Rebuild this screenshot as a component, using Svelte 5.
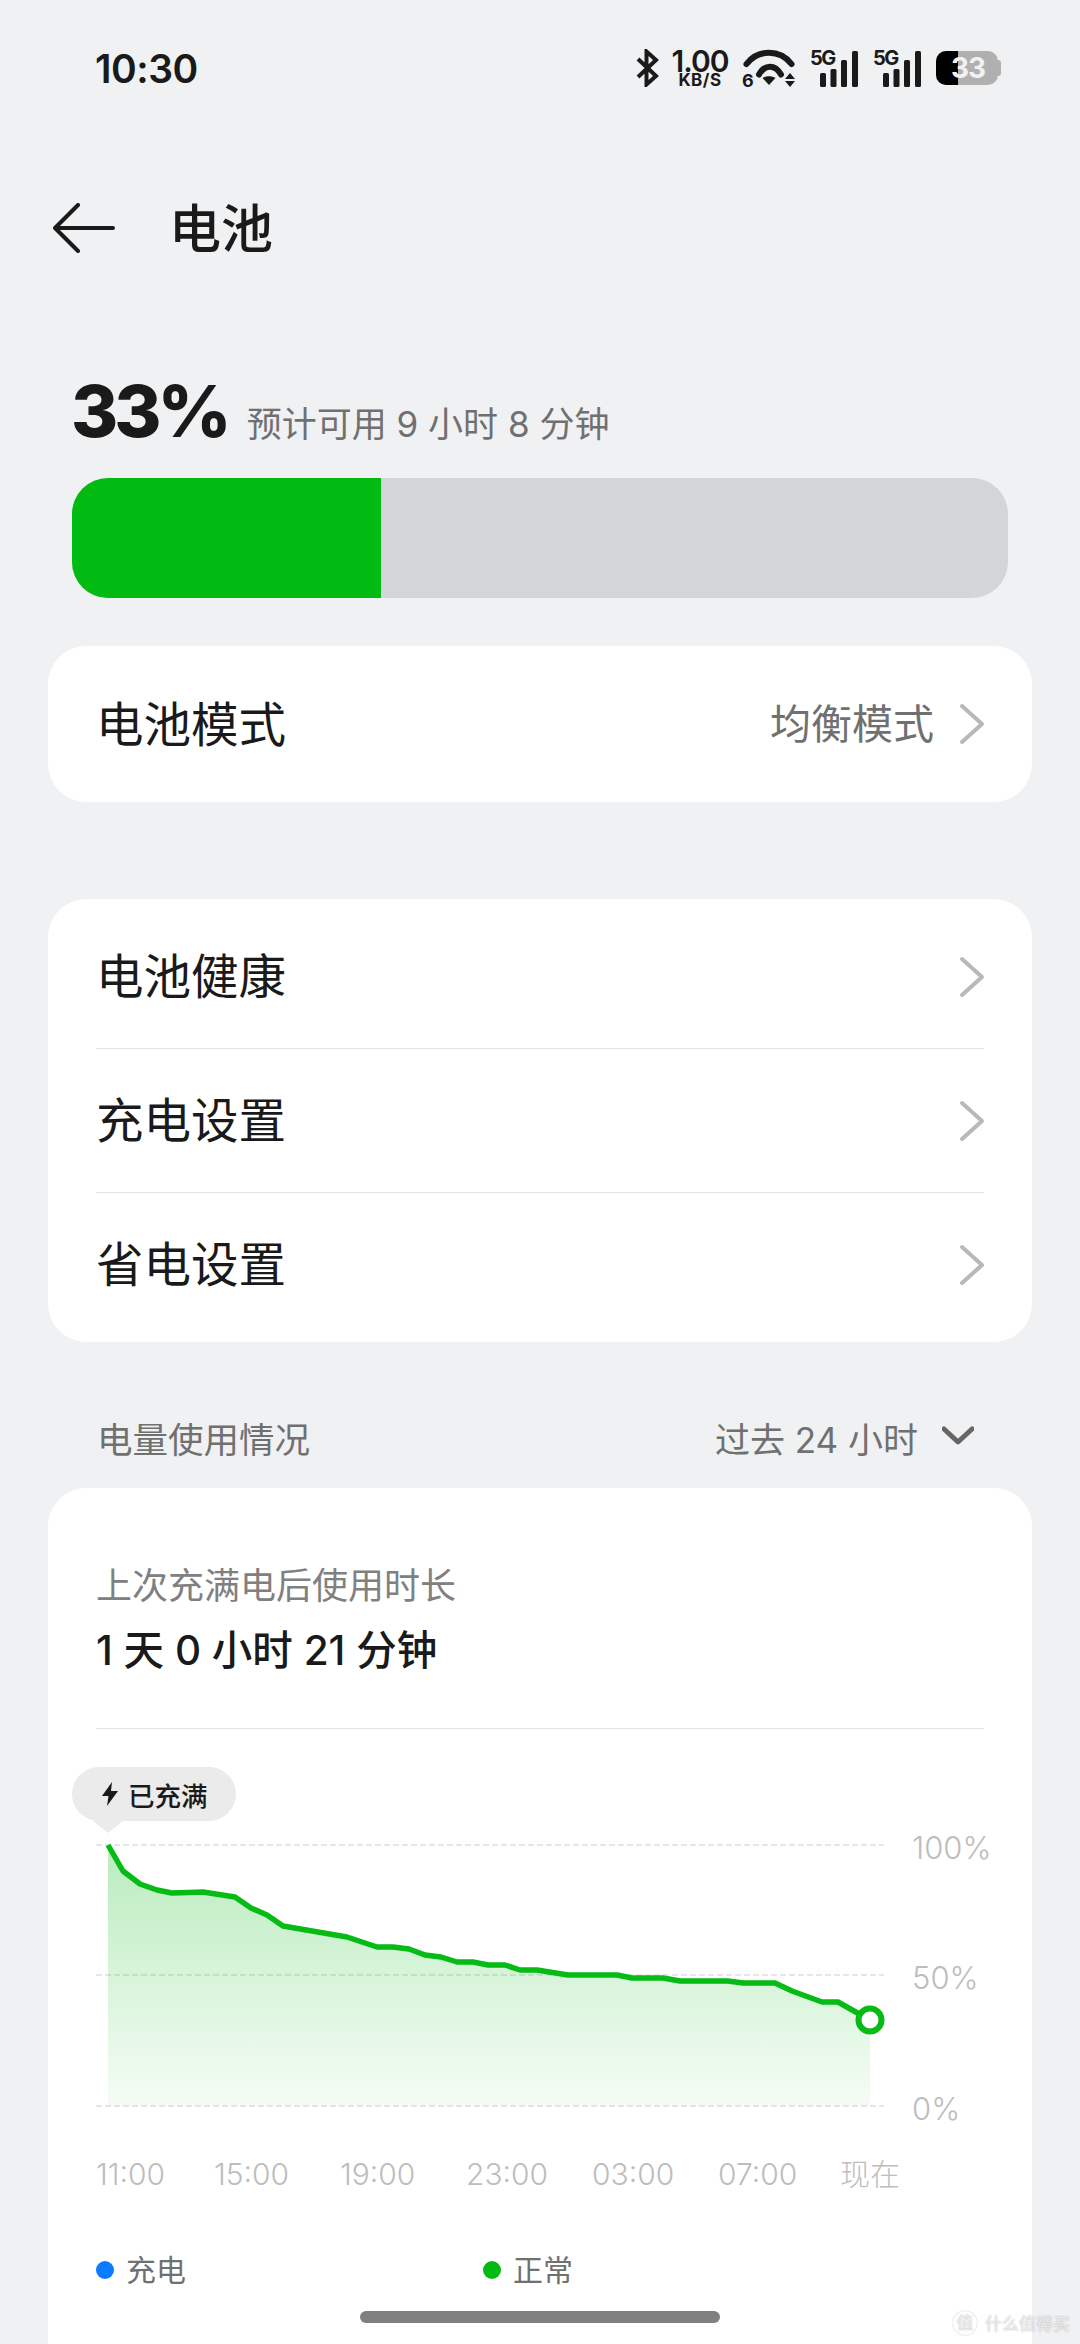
<script>
  const settings = ['电池健康', '充电设置', '省电设置'];
  const hours = ['11:00', '15:00', '19:00', '23:00', '03:00', '07:00', '现在'];
  const levels = [
    { y: 1845, label: '100%' },
    { y: 1975, label: '50%' },
    { y: 2106, label: '0%' }
  ];

  // chart points, in page coordinates (the svg viewBox is offset to match)
  const points = [
    [108, 1845], [123, 1871], [140, 1884], [157, 1890], [172, 1893], [203, 1892],
    [235, 1897], [251, 1908], [267, 1915], [283, 1926], [347, 1937], [377, 1947],
    [393, 1947], [409, 1949], [425, 1955], [441, 1957], [457, 1962], [473, 1962],
    [488, 1965], [505, 1965], [520, 1970], [537, 1970], [568, 1975], [617, 1975],
    [632, 1978], [663, 1978], [680, 1981], [728, 1981], [743, 1983], [775, 1983],
    [792, 1991], [822, 2002], [838, 2002], [870, 2020]
  ];
  const line = points.map((p) => p.join(',')).join(' ');
  const area = `108,2106 ${line} 870,2106`;
</script>

{#snippet chevron()}
  <svg class="chevron" viewBox="0 0 26 42" aria-hidden="true">
    <path d="M3 3 L23 21 L3 39" />
  </svg>
{/snippet}

{#snippet signal()}
  <div class="signal">
    <span class="net">5G</span>
    <svg viewBox="0 0 48 38" width="48" height="38" aria-hidden="true">
      <rect x="10" y="24" width="6" height="14" rx="1.5" />
      <rect x="20.5" y="20" width="6" height="18" rx="1.5" />
      <rect x="31" y="11" width="6" height="27" rx="1.5" />
      <rect x="42" y="2" width="6" height="36" rx="1.5" />
    </svg>
  </div>
{/snippet}

<div class="page">
  <div class="status">
    <span class="time">10:30</span>
    <div class="icons">
      <svg class="bt" viewBox="0 0 24 38" width="24" height="38" aria-hidden="true">
        <path d="M3 10 L21 27 L11.5 35.5 L11.5 2.5 L21 11 L3 28" />
      </svg>
      <div class="speed">
        <span class="speed-num">1.00</span>
        <span class="speed-unit">KB/S</span>
      </div>
      <svg class="wifi" viewBox="740 44 56 48" width="56" height="48" aria-hidden="true">
        <path class="arc" d="M745.5 64 C757 49 779 49 790.5 64" />
        <path class="arc" d="M758 74.5 C764 64 774 64 780 74.5" />
        <path d="M761.5 78 C765 75.5 771 75.5 774.5 78 L768 85 Z" />
        <path d="M789 73 L794 79 L784 79 Z M784 81 L794 81 L789 87 Z" />
        <text x="741" y="87" class="six">6</text>
      </svg>
      {@render signal()}
      {@render signal()}
      <div class="battery">
        <div class="battery-fill"></div>
        <span class="battery-num">33</span>
        <div class="battery-nub"></div>
      </div>
    </div>
  </div>

  <header class="top">
    <svg class="back" viewBox="0 0 62 50" width="62" height="50" aria-hidden="true">
      <path d="M25 2 L2 25 L25 48 M2 25 L60 25" />
    </svg>
    <h1>电池</h1>
  </header>

  <section class="summary">
    <div class="headline">
      <span class="pct">33%</span>
      <span class="remain">预计可用 9 小时 8 分钟</span>
    </div>
    <div class="bar"><div class="bar-fill" style="width: 33%"></div></div>
  </section>

  <div class="card mode">
    <div class="row">
      <span class="row-title">电池模式</span>
      <span class="row-value">均衡模式</span>
      {@render chevron()}
    </div>
  </div>

  <div class="card list">
    {#each settings as item, i}
      {#if i > 0}<div class="divider"></div>{/if}
      <div class="row">
        <span class="row-title">{item}</span>
        {@render chevron()}
      </div>
    {/each}
  </div>

  <div class="section-head">
    <span>电量使用情况</span>
    <div class="range">
      <span>过去 24 小时</span>
      <svg viewBox="0 0 32 20" width="32" height="20" aria-hidden="true">
        <path d="M2 3 L16 16 L30 3" />
      </svg>
    </div>
  </div>

  <div class="card usage">
    <div class="usage-label">上次充满电后使用时长</div>
    <div class="usage-value">1 天 0 小时 21 分钟</div>
    <div class="divider usage-line"></div>

    <div class="chart">
      <svg viewBox="48 1740 984 392" width="984" height="392" aria-hidden="true">
        <defs>
          <linearGradient id="fade" x1="0" y1="1845" x2="0" y2="2106" gradientUnits="userSpaceOnUse">
            <stop offset="0" stop-color="#05bb14" stop-opacity="0.28" />
            <stop offset="1" stop-color="#05bb14" stop-opacity="0.04" />
          </linearGradient>
        </defs>
        {#each levels as level}
          <line class="grid" x1="96" x2="884" y1={level.y} y2={level.y} />
          <text class="level" x="912" y={level.y + 14}>{level.label}</text>
        {/each}
        <polygon points={area} fill="url(#fade)" />
        <polyline class="trace" points={line} />
        <circle class="now" cx="870" cy="2020" r="11.5" />
      </svg>
      <div class="bubble">
        <svg viewBox="0 0 16 24" width="16" height="24" aria-hidden="true">
          <path d="M10 0 L0 14 L6.5 14 L5 24 L16 9 L9 9 Z" />
        </svg>
        <span>已充满</span>
      </div>
    </div>

    <div class="hours">
      {#each hours as hour}
        <span>{hour}</span>
      {/each}
    </div>

    <div class="legend">
      <div class="legend-item"><i class="dot blue"></i>充电</div>
      <div class="legend-item"><i class="dot green"></i>正常</div>
    </div>
  </div>

  <div class="home"></div>
  <div class="mark">
    <span class="mark-logo">值</span>
    <span>什么值得买</span>
  </div>
</div>

<style>
  :global(body) {
    margin: 0;
    background: #f0f1f3;
  }

  .page {
    position: relative;
    width: 1080px;
    height: 2344px;
    overflow: hidden;
    background: #f0f1f3;
    color: #1a1a1a;
    font-family: Inter, "Noto Sans CJK SC", sans-serif;
  }

  /* status bar */
  .status {
    height: 136px;
    display: flex;
    align-items: center;
    justify-content: space-between;
    padding: 0 79px 0 95px;
    box-sizing: border-box;
  }

  .time {
    font-size: 39px;
    font-weight: 600;
    letter-spacing: -0.5px;
  }

  .icons {
    display: flex;
    align-items: center;
    gap: 13px;
  }

  .bt path {
    fill: none;
    stroke: #1a1a1a;
    stroke-width: 4;
  }

  .speed {
    display: flex;
    flex-direction: column;
    align-items: center;
    line-height: 1;
    width: 56px;
  }

  .speed-num {
    font-size: 30px;
    font-weight: 600;
    letter-spacing: -1px;
    height: 25px;
    line-height: 25px;
  }

  .speed-unit {
    font-size: 17px;
    font-weight: 700;
    letter-spacing: 0.5px;
    height: 13px;
    line-height: 13px;
  }

  .wifi path {
    fill: #1a1a1a;
  }

  .wifi .arc {
    fill: none;
    stroke: #1a1a1a;
    stroke-width: 6;
    stroke-linecap: round;
  }

  .six {
    font-size: 18px;
    font-weight: 700;
    fill: #1a1a1a;
  }

  .signal {
    position: relative;
    width: 48px;
    height: 38px;
    margin-right: 2px;
  }

  .signal rect {
    fill: #1a1a1a;
  }

  .net {
    position: absolute;
    left: 0;
    top: -1px;
    font-size: 20px;
    font-weight: 700;
    letter-spacing: -1.5px;
    line-height: 20px;
  }

  .battery {
    position: relative;
    width: 62px;
    height: 34px;
    margin-right: 3px;
    background: #b0b0b0;
    border-radius: 10px;
  }

  .battery-fill {
    width: 22px;
    height: 100%;
    background: #000;
    border-radius: 10px 0 0 10px;
  }

  .battery-num {
    position: absolute;
    left: 15px;
    top: 0;
    font-size: 28px;
    font-weight: 700;
    line-height: 34px;
    letter-spacing: -1px;
    color: #f2f2f2;
  }

  .battery-nub {
    position: absolute;
    right: -3px;
    top: 9px;
    width: 3px;
    height: 16px;
    background: #b0b0b0;
    border-radius: 0 3px 3px 0;
  }

  /* title */
  .top {
    height: 184px;
    display: flex;
    align-items: center;
    padding-left: 53px;
  }

  .back path {
    fill: none;
    stroke: #1a1a1a;
    stroke-width: 4;
    stroke-linecap: round;
    stroke-linejoin: round;
  }

  h1 {
    margin: -6px 0 0 54px;
    font-size: 52px;
    font-weight: 500;
  }

  /* battery level */
  .summary {
    padding: 0 71px;
  }

  .headline {
    display: flex;
    align-items: baseline;
    height: 158px;
    box-sizing: border-box;
    padding-top: 46px;
    gap: 19px;
  }

  .pct {
    font-size: 72px;
    font-weight: 800;
    line-height: 90px;
    letter-spacing: -4px;
  }

  .remain {
    font-size: 35px;
    color: #707070;
  }

  .bar {
    height: 120px;
    margin: 0 1px;
    border-radius: 36px;
    overflow: hidden;
    background: #d4d5d7;
  }

  .bar-fill {
    height: 100%;
    background: #02bb12;
  }

  /* cards */
  .card {
    margin: 0 48px;
    background: #fff;
    border-radius: 38px;
  }

  .mode {
    margin-top: 48px;
  }

  .mode .row {
    height: 156px;
  }

  .list {
    margin-top: 97px;
    padding: 6px 0;
  }

  .row {
    height: 143px;
    display: flex;
    align-items: center;
    padding: 0 47px 0 48px;
  }

  .row-title {
    flex: 1;
    margin-top: -6px;
    font-size: 47.5px;
    font-weight: 400;
  }

  .row-value {
    margin-top: -7px;
    font-size: 41px;
    color: #707070;
    margin-right: 25px;
  }

  .chevron {
    width: 26px;
    height: 42px;
  }

  .chevron path {
    fill: none;
    stroke: #b8b8b8;
    stroke-width: 4;
    stroke-linecap: round;
    stroke-linejoin: round;
  }

  .divider {
    height: 1px;
    margin: 0 48px;
    background: #e2e2e2;
  }

  /* usage */
  .section-head {
    height: 146px;
    box-sizing: border-box;
    padding: 45px 106px 0 97px;
    display: flex;
    align-items: center;
    justify-content: space-between;
    font-size: 35.5px;
    color: #707070;
  }

  .range {
    display: flex;
    align-items: center;
    gap: 24px;
    font-size: 35px;
  }

  .range svg {
    margin-top: -4px;
  }

  .range svg path {
    fill: none;
    stroke: #666;
    stroke-width: 5;
    stroke-linecap: round;
    stroke-linejoin: round;
  }

  .usage {
    height: 900px;
    padding-top: 74px;
    box-sizing: border-box;
  }

  .usage-label {
    margin-left: 48px;
    font-size: 36px;
    line-height: 48px;
    color: #808080;
  }

  .usage-value {
    margin: 13px 0 0 48px;
    font-size: 40.5px;
    line-height: 56px;
    font-weight: 500;
  }

  .usage-line {
    margin-top: 49px;
  }

  .chart {
    position: relative;
    height: 392px;
    margin-top: 11px;
  }

  .chart svg {
    display: block;
  }

  .grid {
    stroke: #dedede;
    stroke-width: 1.5;
    stroke-dasharray: 6 3;
  }

  .level {
    font-size: 31px;
    font-weight: 300;
    fill: #bdbdbd;
  }

  .trace {
    fill: none;
    stroke: #05bb14;
    stroke-width: 5.5;
    stroke-linejoin: round;
  }

  .now {
    fill: #fff;
    stroke: #05bb14;
    stroke-width: 6;
  }

  /* sits over the chart, pointing at the first sample */
  .bubble {
    position: absolute;
    left: 24px;
    top: 27px;
    width: 164px;
    height: 54px;
    box-sizing: border-box;
    padding-left: 30px;
    display: flex;
    align-items: center;
    gap: 10px;
    background: #ebebeb;
    border-radius: 27px;
    font-size: 26.5px;
    font-weight: 500;
  }

  .bubble::after {
    content: '';
    position: absolute;
    left: 21px;
    top: 54px;
    width: 30px;
    height: 12px;
    background: #ebebeb;
    clip-path: polygon(0 0, 100% 0, 50% 100%);
  }

  .bubble path {
    fill: #1a1a1a;
  }

  .hours {
    display: grid;
    grid-template-columns: 118px repeat(4, 126px) 122px 1fr;
    margin: 20px 0 0 48px;
    font-size: 30px;
    font-weight: 300;
    line-height: 44px;
    color: #bdbdbd;
  }

  .legend {
    display: grid;
    grid-template-columns: 387px 1fr;
    margin: 53px 0 0 48px;
    font-size: 30px;
    line-height: 42px;
    color: #707070;
  }

  .legend-item {
    display: flex;
    align-items: center;
    gap: 12px;
  }

  .dot {
    width: 18px;
    height: 18px;
    border-radius: 50%;
  }

  .blue {
    background: #0a7cff;
  }

  .green {
    background: #02bb12;
  }

  /* gesture bar and the publisher's stamp float over the page */
  .home {
    position: absolute;
    left: 360px;
    top: 2311px;
    width: 360px;
    height: 12px;
    border-radius: 6px;
    background: #808080;
  }

  .mark {
    position: absolute;
    left: 953px;
    top: 2310px;
    display: flex;
    align-items: center;
    gap: 8px;
    font-size: 17px;
    color: rgba(255, 255, 255, 0.7);
    text-shadow: 0 0 1.5px rgba(0, 0, 0, 0.35);
  }

  .mark-logo {
    width: 24px;
    height: 24px;
    line-height: 24px;
    text-align: center;
    border-radius: 50%;
    box-shadow: 0 0 1.5px rgba(0, 0, 0, 0.3);
  }
</style>
